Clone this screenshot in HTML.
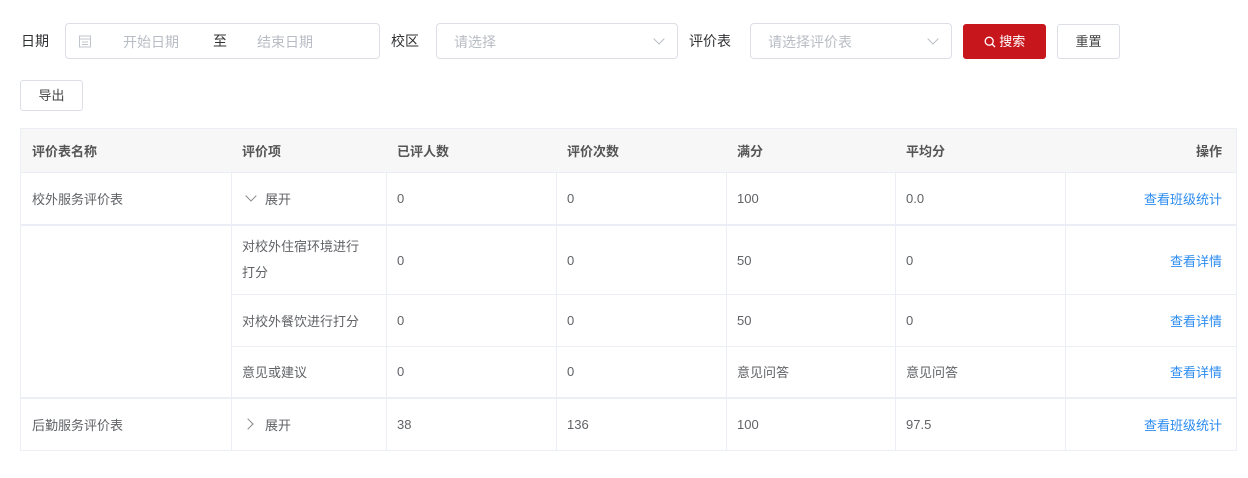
<!DOCTYPE html>
<html><head><meta charset="utf-8"><style>
*{box-sizing:border-box;margin:0;padding:0}
body{width:1248px;height:478px;background:#fff;font-family:"Liberation Sans","Noto Sans CJK SC",sans-serif;font-size:14px;color:#606266;position:relative;overflow:hidden}
.a{position:absolute}
.lbl{color:#303133;font-size:14px}
.inp{border:1px solid #dcdfe6;border-radius:4px;height:36px;background:#fff}
.ph{color:#b8bcc4}
.btn{border:1px solid #dcdfe6;border-radius:3px;background:#fff;color:#444;font-size:13px;text-align:center}
.cell{position:absolute;display:flex;align-items:center;padding-left:11px;font-size:13px;color:#606266;border-right:1px solid #ebeef5;border-bottom:1px solid #ebeef5}
.hd{background:#f7f7f7;font-weight:bold;color:#555}
.lk{color:#2d8cf0;justify-content:flex-end;padding-right:14px}
.chev{position:absolute;left:12px;top:50%;width:8px;height:8px;border-right:1.3px solid #888;border-bottom:1.3px solid #888}
</style></head><body>
<div class="a lbl" style="left:21px;top:31px">日期</div>
<div class="a inp" style="left:65px;top:23px;width:315px">
 <svg class="a" style="left:12px;top:10px" width="14" height="14" viewBox="0 0 14 14"><rect x="1.5" y="2" width="11" height="11" fill="none" stroke="#c0c4cc"/><line x1="1.5" y1="5" x2="12.5" y2="5" stroke="#c0c4cc"/><line x1="4" y1="8" x2="10" y2="8" stroke="#c0c4cc"/><line x1="4" y1="10.5" x2="10" y2="10.5" stroke="#c0c4cc"/></svg>
 <span class="a ph" style="left:57px;top:8px">开始日期</span>
 <span class="a" style="left:147px;top:7px;color:#333">至</span>
 <span class="a ph" style="left:191px;top:8px">结束日期</span>
</div>
<div class="a lbl" style="left:391px;top:31px">校区</div>
<div class="a inp" style="left:436px;top:23px;width:242px"><span class="a ph" style="left:17px;top:8px">请选择</span><span class="chev" style="left:218px;top:11px;transform:rotate(45deg);border-color:#b8bcc4"></span></div>
<div class="a lbl" style="left:689px;top:31px">评价表</div>
<div class="a inp" style="left:750px;top:23px;width:202px"><span class="a ph" style="left:17px;top:8px">请选择评价表</span><span class="chev" style="left:178px;top:11px;transform:rotate(45deg);border-color:#b8bcc4"></span></div>
<div class="a btn" style="left:963px;top:24px;width:83px;height:35px;background:#c8161d;border-color:#c8161d;color:#fff;line-height:33px">
 <svg style="vertical-align:-2px" width="12" height="12" viewBox="0 0 12 12"><circle cx="5.2" cy="5.2" r="4" fill="none" stroke="#fff" stroke-width="1.3"/><line x1="8" y1="8" x2="11" y2="11" stroke="#fff" stroke-width="1.3"/></svg> 搜索</div>
<div class="a btn" style="left:1057px;top:24px;width:63px;height:35px;line-height:33px">重置</div>
<div class="a btn" style="left:20px;top:80px;width:63px;height:31px;line-height:29px">导出</div>

<div class="a" style="left:20px;top:128px;width:1217px;height:323px;border-top:1px solid #ebeef5;border-left:1px solid #ebeef5"></div>
<div class="cell hd" style="left:21px;top:129px;width:211px;height:44px">评价表名称</div>
<div class="cell hd" style="left:231px;top:129px;width:156px;height:44px">评价项</div>
<div class="cell hd" style="left:386px;top:129px;width:171px;height:44px">已评人数</div>
<div class="cell hd" style="left:556px;top:129px;width:171px;height:44px">评价次数</div>
<div class="cell hd" style="left:726px;top:129px;width:170px;height:44px">满分</div>
<div class="cell hd" style="left:895px;top:129px;width:171px;height:44px">平均分</div>
<div class="cell hd" style="left:1065px;top:129px;width:172px;height:44px;justify-content:flex-end;padding-right:14px">操作</div>
<div class="cell" style="left:21px;top:172px;width:211px;height:53px">校外服务评价表</div>
<div class="cell" style="left:231px;top:172px;width:156px;height:53px;padding-left:34px"><span class="chev" style="left:16px;top:20px;transform:rotate(45deg)"></span>展开</div>
<div class="cell" style="left:386px;top:172px;width:171px;height:53px">0</div>
<div class="cell" style="left:556px;top:172px;width:171px;height:53px">0</div>
<div class="cell" style="left:726px;top:172px;width:170px;height:53px">100</div>
<div class="cell" style="left:895px;top:172px;width:171px;height:53px">0.0</div>
<div class="cell lk" style="left:1065px;top:172px;width:172px;height:53px">查看班级统计</div>
<div class="cell" style="left:21px;top:224px;width:211px;height:175px;border-top:2px solid #ebeef5;border-bottom:2px solid #ebeef5"></div>
<div class="cell" style="left:231px;top:224px;width:156px;height:71px;border-top:2px solid #ebeef5;line-height:26px">对校外住宿环境进行<br>打分</div>
<div class="cell" style="left:386px;top:224px;width:171px;height:71px;border-top:2px solid #ebeef5">0</div>
<div class="cell" style="left:556px;top:224px;width:171px;height:71px;border-top:2px solid #ebeef5">0</div>
<div class="cell" style="left:726px;top:224px;width:170px;height:71px;border-top:2px solid #ebeef5">50</div>
<div class="cell" style="left:895px;top:224px;width:171px;height:71px;border-top:2px solid #ebeef5">0</div>
<div class="cell lk" style="left:1065px;top:224px;width:172px;height:71px;border-top:2px solid #ebeef5">查看详情</div>
<div class="cell" style="left:231px;top:294px;width:156px;height:53px">对校外餐饮进行打分</div>
<div class="cell" style="left:386px;top:294px;width:171px;height:53px">0</div>
<div class="cell" style="left:556px;top:294px;width:171px;height:53px">0</div>
<div class="cell" style="left:726px;top:294px;width:170px;height:53px">50</div>
<div class="cell" style="left:895px;top:294px;width:171px;height:53px">0</div>
<div class="cell lk" style="left:1065px;top:294px;width:172px;height:53px">查看详情</div>
<div class="cell" style="left:231px;top:346px;width:156px;height:53px;border-bottom:2px solid #ebeef5">意见或建议</div>
<div class="cell" style="left:386px;top:346px;width:171px;height:53px;border-bottom:2px solid #ebeef5">0</div>
<div class="cell" style="left:556px;top:346px;width:171px;height:53px;border-bottom:2px solid #ebeef5">0</div>
<div class="cell" style="left:726px;top:346px;width:170px;height:53px;border-bottom:2px solid #ebeef5">意见问答</div>
<div class="cell" style="left:895px;top:346px;width:171px;height:53px;border-bottom:2px solid #ebeef5">意见问答</div>
<div class="cell lk" style="left:1065px;top:346px;width:172px;height:53px;border-bottom:2px solid #ebeef5">查看详情</div>
<div class="cell" style="left:21px;top:398px;width:211px;height:53px">后勤服务评价表</div>
<div class="cell" style="left:231px;top:398px;width:156px;height:53px;padding-left:34px"><span class="chev" style="left:13px;top:22px;transform:rotate(-45deg)"></span>展开</div>
<div class="cell" style="left:386px;top:398px;width:171px;height:53px">38</div>
<div class="cell" style="left:556px;top:398px;width:171px;height:53px">136</div>
<div class="cell" style="left:726px;top:398px;width:170px;height:53px">100</div>
<div class="cell" style="left:895px;top:398px;width:171px;height:53px">97.5</div>
<div class="cell lk" style="left:1065px;top:398px;width:172px;height:53px">查看班级统计</div>
</body></html>
